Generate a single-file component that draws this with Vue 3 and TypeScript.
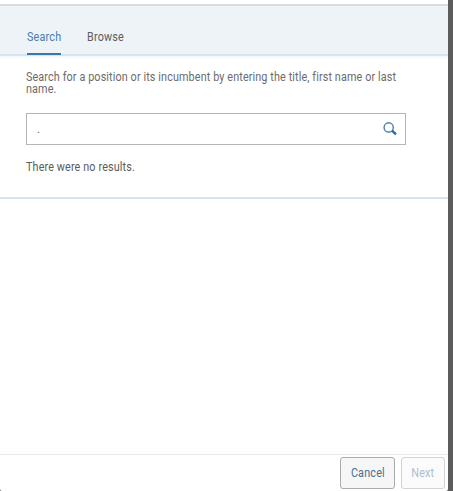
<script setup lang="ts">
import { computed, ref } from "vue";

type TabId = "search" | "browse";

const tabs: { id: TabId; label: string }[] = [
  { id: "search", label: "Search" },
  { id: "browse", label: "Browse" }
];

const activeTab = ref<TabId>("search");
const query = ref(".");
const results = ref<string[]>([]);
const selected = ref<string | null>(null);

const canContinue = computed(() => selected.value !== null);
</script>

<template>
  <div class="page">
    <section class="dialog">
      <nav class="tabs" role="tablist">
        <button
          v-for="tab in tabs"
          :key="tab.id"
          class="tab"
          :class="[tab.id, { active: tab.id === activeTab }]"
          role="tab"
          :aria-selected="tab.id === activeTab"
          @click="activeTab = tab.id"
        >
          <span class="label">{{ tab.label }}</span>
        </button>
      </nav>

      <div class="search-panel">
        <p class="hint">
          Search for a position or its incumbent by entering the title, first name or last name.
        </p>
        <div class="search-field">
          <input v-model="query" type="text" aria-label="Search" />
          <button class="search-button" aria-label="Run search">
            <svg viewBox="0 0 14 14" width="14" height="14" fill="none">
              <circle cx="5.7" cy="5.4" r="4.6" stroke="#507da5" stroke-width="1.4" />
              <path d="M9 8.6 L13 12.4" stroke="#346895" stroke-width="2.4" />
            </svg>
          </button>
        </div>
        <p v-if="results.length === 0" class="empty">There were no results.</p>
      </div>

      <div class="content"></div>

      <footer class="actions">
        <button class="action cancel"><span class="label">Cancel</span></button>
        <button class="action next" :disabled="!canContinue"><span class="label">Next</span></button>
      </footer>
    </section>
  </div>
</template>

<style>
body {
  overflow: hidden;
  background: #5c5c5c;
}
</style>

<style scoped>
.page {
  box-sizing: border-box;
  height: 491px;
  padding-right: 5px;
  font-family: Roboto, "Liberation Sans", sans-serif;
  font-size: 12px;
  color: #6b6b6b;
}

.dialog {
  display: flex;
  flex-direction: column;
  box-sizing: border-box;
  height: 100%;
  padding-top: 4px;
  border-radius: 0 0 2px 2px;
  background: #fff;
}

button,
input {
  margin: 0;
  padding: 0;
  border: 0;
  background: none;
  font: inherit;
}

/* slightly condensed lettering */
.label,
.hint,
.empty {
  transform: scaleX(0.9);
}

.label {
  display: inline-block;
  letter-spacing: 0.2px;
}

.tabs {
  display: flex;
  gap: 26px;
  box-sizing: border-box;
  height: 54px;
  padding-left: 27px;
  border-top: 2px solid #dadcde;
  border-bottom: 2px solid #f3f8fb;
  background: linear-gradient(#edf3f7 48px, #d5e4ef 48px);
}

.tab {
  display: flex;
  align-items: flex-start;
  box-sizing: border-box;
  height: 49px;
  padding-top: 24px;
  border-bottom: 2px solid transparent;
  color: #5b5c5e;
  line-height: 14px;
}

.tab .label {
  transform-origin: left;
}

.tab.search {
  width: 34px;
}

.tab.browse {
  width: 36px;
}

.tab.active {
  border-bottom-color: #3c76a8;
  color: #477eac;
}

.search-panel {
  box-sizing: border-box;
  height: 141px;
  padding: 13px 42px 0 26px;
  border-bottom: 2px solid #d5e4ef;
}

.hint {
  width: 422px;
  margin: 0;
  line-height: 12px;
  letter-spacing: 0.13px;
  transform-origin: left;
}

.search-field {
  display: flex;
  align-items: center;
  box-sizing: border-box;
  height: 32px;
  margin-top: 18px;
  padding: 0 8px 0 10px;
  border: 1px solid #b5b5b5;
}

.search-field input {
  flex: 1;
  min-width: 0;
  outline: none;
  color: #555;
  font-size: 11px;
}

.search-button {
  display: flex;
  width: 14px;
  height: 14px;
}

.empty {
  margin: 15px 0 0;
  color: #5c5c5c;
  line-height: 14px;
  letter-spacing: 0.14px;
  transform-origin: left;
}

.content {
  flex: 1;
}

.actions {
  display: flex;
  justify-content: flex-end;
  gap: 6px;
  box-sizing: border-box;
  height: 37px;
  padding: 2px 3px 0 0;
  border-top: 1px solid #e9e9e9;
}

.action {
  display: flex;
  align-items: center;
  justify-content: center;
  box-sizing: border-box;
  height: 32px;
  border: 1px solid #a9abad;
  border-radius: 3px;
  background: #f6f6f6;
  color: #426f94;
}

.cancel {
  width: 55px;
}

.next {
  width: 44px;
}

.next:disabled {
  border-color: #d2d4d5;
  background: #fbfbfb;
  color: #aabfd0;
}
</style>
